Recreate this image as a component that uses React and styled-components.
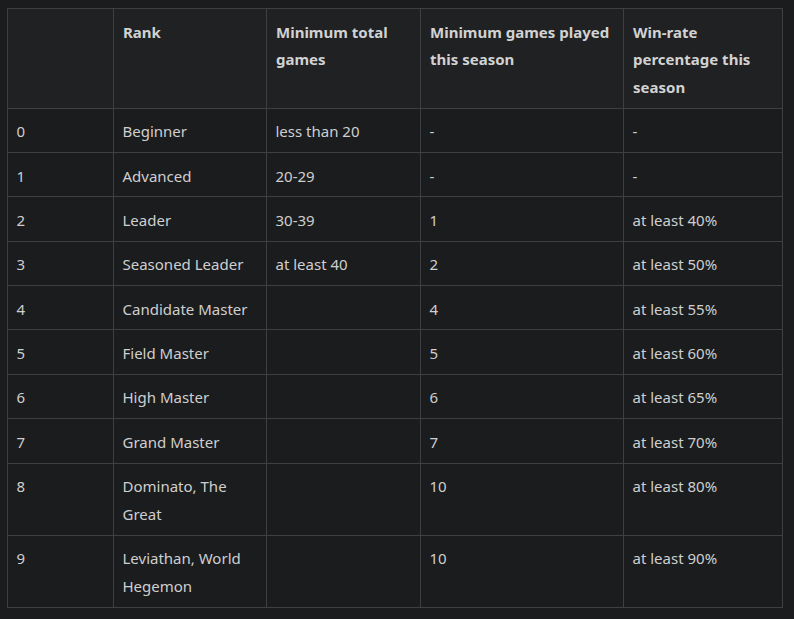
import React from "react";
import styled, { createGlobalStyle } from "styled-components";

const GlobalStyle = createGlobalStyle`
  html, body {
    margin: 0;
    background: #1b1c1e;
  }
  body {
    padding: 8px 0 0 7px;
    font-family: "Noto Sans", "Open Sans", sans-serif;
  }
`;

const Table = styled.table`
  border-collapse: collapse;
  table-layout: fixed;
  width: 775px;
  color: #cfcfcf;
  font-size: 15px;
  line-height: 27.6px;
`;

// text sits a touch lower in the cell than a centred line box
const HeadCell = styled.th`
  background: #1f2123;
  border: 1px solid #3d3f42;
  padding: 9.6px 9px 6.2px 9px;
  text-align: left;
  vertical-align: top;
  font-weight: 700;
  color: #d2d2d2;
`;

const Cell = styled.td`
  border: 1px solid #3d3f42;
  padding: 9.6px 9px 6.2px 8.5px;
  vertical-align: top;
`;

const columns = [
  { label: "", width: 106 },
  { label: "Rank", width: 153 },
  { label: "Minimum total games", width: 154 },
  { label: "Minimum games played this season", width: 203 },
  { label: "Win-rate percentage this season", width: 159 },
];

const rows = [
  ["0", "Beginner", "less than 20", "-", "-"],
  ["1", "Advanced", "20-29", "-", "-"],
  ["2", "Leader", "30-39", "1", "at least 40%"],
  ["3", "Seasoned Leader", "at least 40", "2", "at least 50%"],
  ["4", "Candidate Master", "", "4", "at least 55%"],
  ["5", "Field Master", "", "5", "at least 60%"],
  ["6", "High Master", "", "6", "at least 65%"],
  ["7", "Grand Master", "", "7", "at least 70%"],
  ["8", "Dominato, The Great", "", "10", "at least 80%"],
  ["9", "Leviathan, World Hegemon", "", "10", "at least 90%"],
];

const App = () => {
  return (
    <>
      <GlobalStyle />
      <Table>
        <colgroup>
          {columns.map((c, i) => (
            <col key={i} style={{ width: c.width }} />
          ))}
        </colgroup>
        <thead>
          <tr>
            {columns.map((c, i) => (
              <HeadCell key={i}>{c.label}</HeadCell>
            ))}
          </tr>
        </thead>
        <tbody>
          {rows.map((r) => (
            <tr key={r[0]}>
              {r.map((v, i) => (
                <Cell key={i}>{v}</Cell>
              ))}
            </tr>
          ))}
        </tbody>
      </Table>
    </>
  );
};

export default App;
